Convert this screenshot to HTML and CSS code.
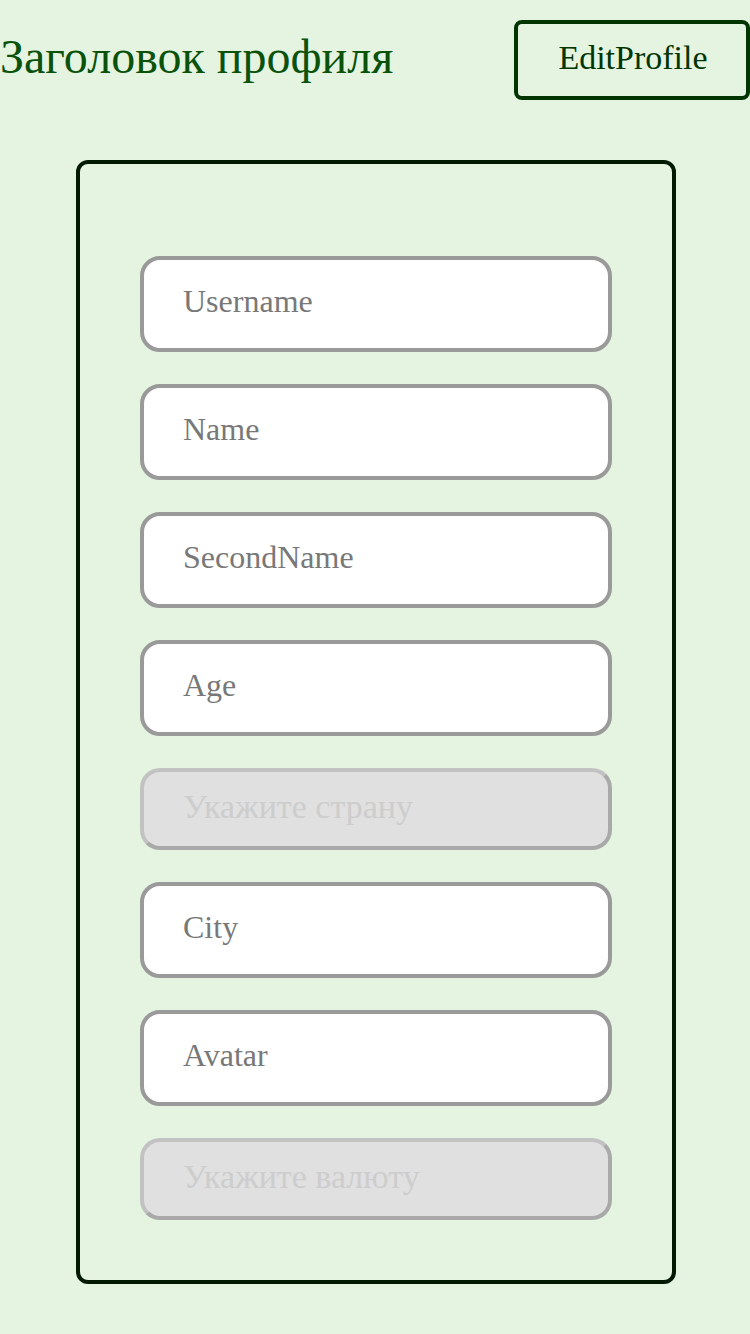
FILE: index.html
```html
<!DOCTYPE html>
<html lang="ru">
<head>
<meta charset="utf-8">
<title>Профиль</title>
<link rel="stylesheet" href="styles.css">
</head>
<body>
<header class="header">
  <h1 class="title">Заголовок профиля</h1>
  <button class="edit-btn" type="button">EditProfile</button>
</header>
<main class="card">
  <form class="form">
    <input class="field" type="text" placeholder="Username">
    <input class="field" type="text" placeholder="Name">
    <input class="field" type="text" placeholder="SecondName">
    <input class="field" type="text" placeholder="Age">
    <input class="field field-disabled" type="text" placeholder="Укажите страну" disabled>
    <input class="field" type="text" placeholder="City">
    <input class="field" type="text" placeholder="Avatar">
    <input class="field field-disabled" type="text" placeholder="Укажите валюту" disabled>
  </form>
</main>
</body>
</html>
```

FILE: styles.css
```css
html, body {
  margin: 0;
  padding: 0;
  background: #e4f4e1;
  font-family: "Liberation Serif", "Times New Roman", serif;
}

.header {
  display: flex;
  justify-content: space-between;
  align-items: center;
  padding-top: 20px;
}

.title {
  margin: 0;
  font-weight: normal;
  font-size: 48px;
  color: #0a520a;
  line-height: 74px;
  padding-bottom: 6px;
}

.edit-btn {
  box-sizing: border-box;
  width: 236px;
  height: 80px;
  border: 4px solid #003500;
  border-radius: 8px;
  background: transparent;
  font-family: "Liberation Serif", "Times New Roman", serif;
  font-size: 34px;
  color: #003500;
  padding: 0 0 4px 2px;
}

.card {
  box-sizing: border-box;
  width: 600px;
  margin: 60px 0 0 76px;
  border: 4px solid #011a01;
  border-radius: 12px;
  padding: 92px 60px 60px;
}

.form {
  display: flex;
  flex-direction: column;
  gap: 32px;
}

.field {
  box-sizing: border-box;
  width: 472px;
  height: 96px;
  margin: 0;
  border: 4px solid #9a9a9a;
  border-radius: 20px;
  background: #ffffff;
  padding: 0 38px 6px 39px;
  font-family: "Liberation Serif", "Times New Roman", serif;
  font-size: 32px;
  color: #333;
  outline: none;
}

.field::placeholder {
  color: #787878;
  opacity: 1;
}

.field-disabled {
  height: 82px;
  background: #e0e0e0;
  border-color: #c2c2c2 #a9a9a9 #a9a9a9 #c2c2c2;
  padding: 0 38px 5px 39px;
  font-size: 34px;
}

.field-disabled::placeholder {
  color: #cdcdcd;
}
```
